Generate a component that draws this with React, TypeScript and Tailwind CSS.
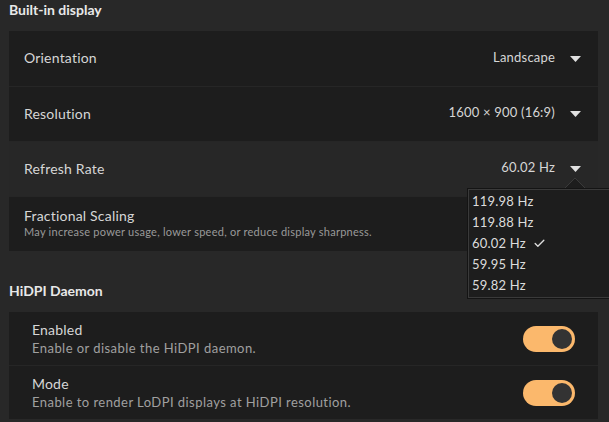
import { Check } from 'lucide-react';

type Row = { label: string; value: string; hover?: boolean };

const rows: Row[] = [
  { label: 'Orientation', value: 'Landscape' },
  { label: 'Resolution', value: '1600 × 900 (16:9)' },
  { label: 'Refresh Rate', value: '60.02 Hz', hover: true },
];

const rates = ['119.98 Hz', '119.88 Hz', '60.02 Hz', '59.95 Hz', '59.82 Hz'];

function Caret() {
  return (
    <svg width="11" height="6" viewBox="0 0 11 6" className="ml-[15px] mt-[2px]">
      <path d="M0 0h11L5.5 6z" fill="#e0e0e0" />
    </svg>
  );
}

function Toggle() {
  return (
    <div className="w-[52px] h-[26px] rounded-full bg-[#fbb86c] flex items-center justify-end pr-[3px]">
      <div className="w-[20px] h-[20px] rounded-full bg-[#333333]" />
    </div>
  );
}

export default function App() {
  return (
    <div className="relative w-[609px] h-[422px] overflow-hidden bg-[#282828] font-['Lato','Noto_Sans',sans-serif] text-[#d6d6d6]">
      <div className="px-[9px]">
        <h2 className="mt-0 mb-[11px] leading-[20px] text-[14px] font-bold text-[#e8e8e8]">Built-in display</h2>
        <div className="w-[589px] bg-[#1d1d1d]">
          {rows.map((r, i) => (
            <div
              key={r.label}
              className={`h-[55px] flex items-center pl-[15px] pr-[17px] pb-[2px] ${i > 0 ? 'border-t border-[#262626]' : ''} ${r.hover ? 'bg-[#272727]' : ''}`}
            >
              <span className="text-[14px] flex-1 tracking-[0.2px]">{r.label}</span>
              <span className="text-[13px] tracking-[0.2px]">{r.value}</span>
              <Caret />
            </div>
          ))}
          <div className="h-[55px] flex flex-col justify-center pl-[15px] border-t border-[#262626]">
            <span className="text-[14px] leading-[16px] tracking-[0.2px]">Fractional Scaling</span>
            <span className="text-[11px] leading-[16px] tracking-[0.25px] text-[#9a9a9a]">
              May increase power usage, lower speed, or reduce display sharpness.
            </span>
          </div>
        </div>

        <h2 className="mt-[30px] mb-[11px] leading-[20px] text-[14px] font-bold text-[#e8e8e8]">HiDPI Daemon</h2>
        <div className="w-[589px] bg-[#1d1d1d]">
          <div className="h-[53px] flex items-center px-[23px]">
            <div className="flex-1 flex flex-col">
              <span className="text-[14px] leading-[18px] tracking-[0.2px]">Enabled</span>
              <span className="text-[13px] leading-[18px] tracking-[0.45px] text-[#a0a0a0]">Enable or disable the HiDPI daemon.</span>
            </div>
            <Toggle />
          </div>
          <div className="h-[54px] flex items-center px-[23px] border-t border-[#262626]">
            <div className="flex-1 flex flex-col">
              <span className="text-[14px] leading-[18px] tracking-[0.2px]">Mode</span>
              <span className="text-[13px] leading-[18px] tracking-[0.45px] text-[#a0a0a0]">
                Enable to render LoDPI displays at HiDPI resolution.
              </span>
            </div>
            <Toggle />
          </div>
        </div>
      </div>

      {/* refresh rate popover */}
      <svg width="24" height="13" viewBox="0 0 24 13" className="absolute left-[563px] top-[177px]">
        <path d="M0 13L12 1L24 13z" fill="#1d1d1d" stroke="#3a3a3a" />
      </svg>
      <div className="absolute left-[468px] top-[189px] w-[150px] h-[109px] bg-[#1d1d1d] border border-[#3a3a3a] shadow-[0_0_0_1px_#141414] pt-[1px]">
        {rates.map((r) => (
          <div key={r} className="h-[21px] flex items-center pl-[3px] text-[13px] tracking-[0.2px] text-[#dcdcdc]">
            {r}
            {r === '60.02 Hz' && <Check size={13} strokeWidth={2.5} className="ml-[7px] text-[#dcdcdc]" />}
          </div>
        ))}
      </div>
    </div>
  );
}
